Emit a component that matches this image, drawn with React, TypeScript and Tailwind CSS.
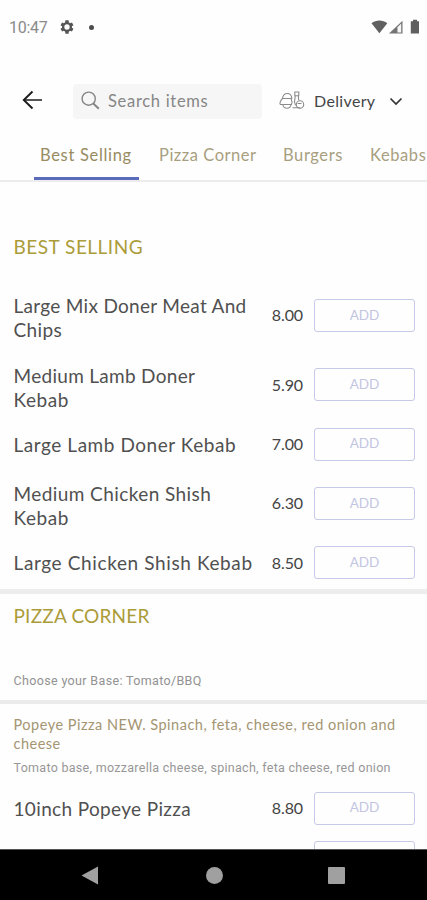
import React from 'react';

type Line = { label: string; tracking: string };
type Item = { name: Line[]; price: string; row: string; text: string };

const two = { row: 'h-[69.5px]', text: 'pt-[6px]' };
const one = { row: 'h-[49px]', text: 'pt-[1px]' };

const bestSelling: Item[] = [
  {
    name: [
      { label: 'Large Mix Doner Meat And', tracking: 'tracking-[0.3px]' },
      { label: 'Chips', tracking: 'tracking-[0.4px]' },
    ],
    price: '8.00',
    ...two,
  },
  {
    name: [
      { label: 'Medium Lamb Doner', tracking: 'tracking-[0.3px]' },
      { label: 'Kebab', tracking: 'tracking-[0.55px]' },
    ],
    price: '5.90',
    ...two,
  },
  { name: [{ label: 'Large Lamb Doner Kebab', tracking: 'tracking-[0.55px]' }], price: '7.00', ...one },
  {
    name: [
      { label: 'Medium Chicken Shish', tracking: 'tracking-[0.42px]' },
      { label: 'Kebab', tracking: 'tracking-[0.55px]' },
    ],
    price: '6.30',
    ...two,
  },
  { name: [{ label: 'Large Chicken Shish Kebab', tracking: 'tracking-[0.62px]' }], price: '8.50', ...one },
];

const popeye: Item = {
  name: [{ label: '10inch Popeye Pizza', tracking: 'tracking-[0.35px]' }],
  price: '8.80',
  ...one,
};

function AddButton({ label }: { label?: string }) {
  return (
    <button className="h-[33px] w-[101px] shrink-0 rounded-[3px] border-[1.5px] border-[#c6c9e8] text-[13.5px] leading-none text-[#c3c5e2]">
      {label}
    </button>
  );
}

function MenuRow({ item }: { item: Item }) {
  return (
    <div className={`flex items-center pr-[12px] pl-[13.5px] ${item.row}`}>
      <div className={`flex-1 text-[19px] leading-[24px] whitespace-nowrap text-[#505050] ${item.text}`}>
        {item.name.map((line) => (
          <div key={line.label} className={line.tracking}>
            {line.label}
          </div>
        ))}
      </div>
      <div className="mr-[11px] text-[16px] leading-[20px] tracking-[-0.1px] text-[#444]">{item.price}</div>
      <AddButton label="ADD" />
    </div>
  );
}

function StatusBar() {
  return (
    <div className="flex h-[54px] shrink-0 items-center pr-[7px] pl-[9px]">
      <span className="w-[39px] pt-[1px] font-[Roboto] text-[16px] leading-none tracking-[-0.3px] text-[#8a8a8a]">10:47</span>
      <svg className="ml-[11px]" width="16" height="16" viewBox="0 0 24 24" fill="#555">
        <path
          fillRule="evenodd"
          d="M19.4 13a7.5 7.5 0 0 0 0-2l2.3-1.8-2.3-4-2.7 1.1a8 8 0 0 0-1.9-1.1L14.4 2H9.6l-.4 3.2a8 8 0 0 0-1.9 1.1L4.6 5.2l-2.3 4L4.6 11a7.5 7.5 0 0 0 0 2l-2.3 1.8 2.3 4 2.7-1.1a8 8 0 0 0 1.9 1.1l.4 3.2h4.8l.4-3.2a8 8 0 0 0 1.9-1.1l2.7 1.1 2.3-4zM12 16a4 4 0 1 1 0-8 4 4 0 0 1 0 8z"
        />
      </svg>
      <span className="ml-[13.5px] h-[5px] w-[5px] rounded-full bg-[#4c4c4c]" />
      <svg className="ml-auto" width="50" height="16" viewBox="0 0 50 16" fill="#606060">
        <path d="M1.5 4.2C6 .6 12.8.6 17.3 4.200L9.400 14.200z" />
        <path d="M19 14.600 32.500 1.800v12.800z" fill="#747474" />
        <path d="M27.500 8.200 31.200 4.600v8.800h-3.700z" fill="#f7f7f7" />
        <path d="M43 .8h4v1.500h2v12.300h-8.200V2.300H43z" />
      </svg>
    </div>
  );
}

function Header() {
  return (
    <div className="flex h-[72px] shrink-0 items-center pt-[20px] pl-[22px]">
      <svg width="21" height="20" viewBox="0 0 21 20" fill="none" stroke="#1b1b1b">
        <path d="M10.500 1.500 1.800 10l8.700 8.500" strokeWidth="1.900" />
        <path d="M2 10h18" strokeWidth="1.500" />
      </svg>
      <div className="mt-[3px] ml-[30px] flex h-[35px] w-[189px] items-center rounded-[4px] bg-[#f6f6f6]">
        <svg className="-mt-[2px] ml-[8px]" width="19" height="19" viewBox="0 0 19 19" fill="none" stroke="#858585" strokeWidth="1.400">
          <circle cx="7.700" cy="7.700" r="6.600" />
          <path d="m12.300 12.500 5.500 5.300" strokeWidth="1.900" />
        </svg>
        <span className="-mt-[2px] ml-[8px] text-[16.5px] leading-[20px] tracking-[0.7px] text-[#868686]">Search items</span>
      </div>
      <svg className="ml-[17px]" width="26" height="19" viewBox="0 0 26 19" fill="none" stroke="#8b8b8b" strokeWidth="1.100">
        <path d="M3.500 7.200C4 4.500 5.800 2.500 8.300 2.500s4.300 2 4.500 5M2.800 7.500h10.500M3.500 7.500c-2.300 2-3 5-2.200 6h11.200c.8-2 .4-4.300-.5-6M3.800 13.500c.8 5 7.500 5 8.200 0" />
        <path d="M15.800 1h4v3.800h-4zM16.300 4.800l-.8 6 1 3.500M19.300 4.800l.4 4.500" />
        <circle cx="21" cy="13.500" r="3.700" />
        <path d="M13.500 16.800h7.500M18.500 12.500h4" />
      </svg>
      <span className="mt-[2px] ml-[9px] w-[62px] text-[16px] leading-[20px] tracking-[0.35px] text-[#454545]">Delivery</span>
      <svg className="mt-[2px] ml-[13px]" width="14" height="9" viewBox="0 0 14 9" fill="none" stroke="#333" strokeWidth="1.700">
        <path d="m1.500 1.500 5.500 5.500 5.500-5.500" />
      </svg>
    </div>
  );
}

function Tabs() {
  return (
    <div className="flex h-[56px] shrink-0 overflow-hidden border-b-2 border-[#ececee] pl-[34px] text-[16.5px] leading-[20px] whitespace-nowrap text-[#a89e80]">
      <div className="w-[105px] shrink-0 border-b-[3px] border-[#5b6bbb] pt-[19px] pl-[6px] tracking-[0.68px] text-[#988b62]">Best Selling</div>
      <div className="ml-[20px] w-[98px] shrink-0 pt-[19px] tracking-[0.52px]">Pizza Corner</div>
      <div className="ml-[26px] w-[60px] shrink-0 pt-[19px] tracking-[0.6px]">Burgers</div>
      <div className="ml-[27px] shrink-0 pt-[19px] tracking-[0.6px]">Kebabs</div>
    </div>
  );
}

export default function App() {
  return (
    <div className="flex h-[900px] w-[427px] flex-col overflow-hidden bg-[#fefefe] font-[Lato,sans-serif]">
      <StatusBar />
      <Header />
      <Tabs />
      <main className="min-h-0 flex-1 overflow-hidden">
        <h2 className="pt-[52.5px] pl-[13.5px] text-[19px] leading-[24px] tracking-[0.5px] text-[#ab9c39]">BEST SELLING</h2>
        <div className="mt-[22px]">
          {bestSelling.map((item) => (
            <MenuRow key={item.price} item={item} />
          ))}
        </div>
        <div className="mt-[2px] h-[5px] bg-[#ededed]" />
        <h2 className="pt-[9.5px] pl-[13.5px] text-[19px] leading-[24px] tracking-[0.2px] text-[#ab9c39]">PIZZA CORNER</h2>
        <p className="mt-[45px] pl-[13.5px] font-[Roboto] text-[12.5px] leading-[16px] tracking-[0.35px] text-[#929292]">Choose your Base: Tomato/BBQ</p>
        <div className="mt-[11.5px] h-[4px] bg-[#ebebeb]" />
        <div className="pt-[11px] pl-[13.5px] text-[14.5px] leading-[19px] tracking-[0.5px] whitespace-nowrap text-[#a49572]">
          <div>Popeye Pizza NEW. Spinach, feta, cheese, red onion and</div>
          <div>cheese</div>
        </div>
        <p className="mt-[6.5px] pl-[13.5px] font-[Roboto] text-[12.5px] leading-[16px] tracking-[0.29px] whitespace-nowrap text-[#979797]">
          Tomato base, mozzarella cheese, spinach, feta cheese, red onion
        </p>
        <div className="mt-[8px]">
          <MenuRow item={popeye} />
          <div className="flex h-[49px] items-center justify-end pr-[12px]">
            <AddButton />
          </div>
        </div>
      </main>
      <nav className="flex h-[51px] shrink-0 items-center border-t border-[#555] bg-black pl-[81px]">
        <svg width="17" height="19" viewBox="0 0 17 19" fill="#a0a0a0">
          <path d="M.5 9.500 17 .5v18z" />
        </svg>
        <span className="ml-[107.5px] h-[17px] w-[17px] rounded-full bg-[#a0a0a0]" />
        <span className="ml-[105.5px] h-[17px] w-[17px] rounded-[1px] bg-[#a0a0a0]" />
      </nav>
    </div>
  );
}
